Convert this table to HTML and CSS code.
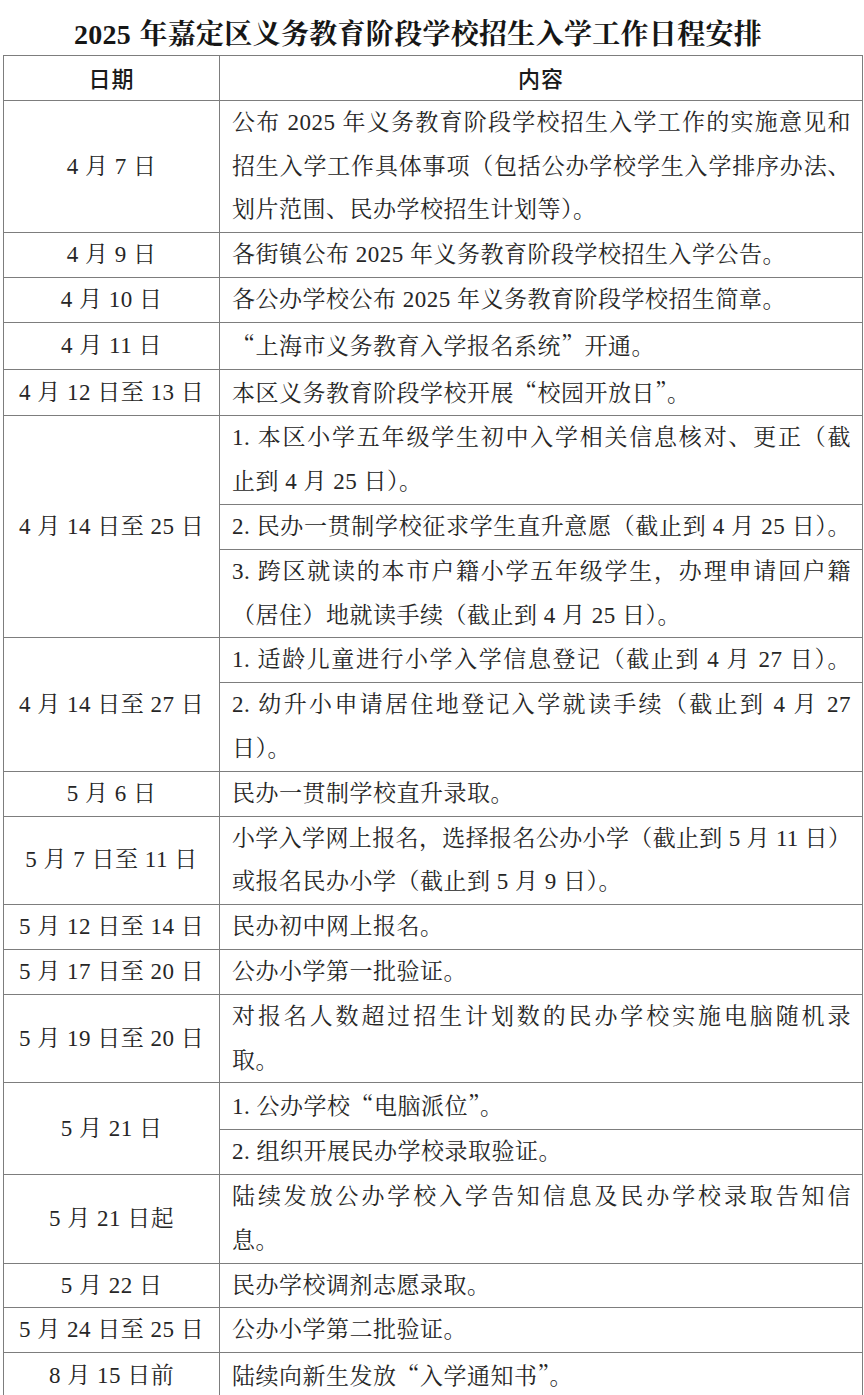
FILE: index.html
```html
<!DOCTYPE html>
<html lang="zh-CN">
<head>
<meta charset="utf-8">
<title>2025年嘉定区义务教育阶段学校招生入学工作日程安排</title>
<link rel="stylesheet" href="styles.css">
</head>
<body>
<h1 class="title">2025 年嘉定区义务教育阶段学校招生入学工作日程安排</h1>
<table class="sched">
  <colgroup><col class="c-date"><col class="c-text"></colgroup>
  <thead>
    <tr><th>日期</th><th>内容</th></tr>
  </thead>
  <tbody>
    <tr><td class="d">4 月 7 日</td><td class="t"><span class="j">公布 2025 年义务教育阶段学校招生入学工作的实施意见和</span><span class="j">招生入学工作具体事项（包括公办学校学生入学排序办法、</span><span class="l">划片范围、民办学校招生计划等）。</span></td></tr>
    <tr><td class="d">4 月 9 日</td><td class="t">各街镇公布 2025 年义务教育阶段学校招生入学公告。</td></tr>
    <tr><td class="d">4 月 10 日</td><td class="t">各公办学校公布 2025 年义务教育阶段学校招生简章。</td></tr>
    <tr><td class="d">4 月 11 日</td><td class="t"><span class="q">“</span>上海市义务教育入学报名系统<span class="q">”</span>开通。</td></tr>
    <tr><td class="d">4 月 12 日至 13 日</td><td class="t">本区义务教育阶段学校开展<span class="q">“</span>校园开放日<span class="q">”</span>。</td></tr>
    <tr><td class="d" rowspan="3">4 月 14 日至 25 日</td><td class="t"><span class="j">1. 本区小学五年级学生初中入学相关信息核对、更正（截</span><span class="l">止到 4 月 25 日）。</span></td></tr>
    <tr><td class="t"><span class="j">2. 民办一贯制学校征求学生直升意愿（截止到 4 月 25 日）。</span></td></tr>
    <tr><td class="t"><span class="j">3. 跨区就读的本市户籍小学五年级学生，办理申请回户籍</span><span class="l">（居住）地就读手续（截止到 4 月 25 日）。</span></td></tr>
    <tr><td class="d" rowspan="2">4 月 14 日至 27 日</td><td class="t"><span class="j">1. 适龄儿童进行小学入学信息登记（截止到 4 月 27 日）。</span></td></tr>
    <tr><td class="t"><span class="j">2. 幼升小申请居住地登记入学就读手续（截止到 4 月 27</span><span class="l">日）。</span></td></tr>
    <tr><td class="d">5 月 6 日</td><td class="t">民办一贯制学校直升录取。</td></tr>
    <tr><td class="d">5 月 7 日至 11 日</td><td class="t"><span class="j tight">小学入学网上报名，选择报名公办小学（截止到 5 月 11 日）</span><span class="l">或报名民办小学（截止到 5 月 9 日）。</span></td></tr>
    <tr><td class="d">5 月 12 日至 14 日</td><td class="t">民办初中网上报名。</td></tr>
    <tr><td class="d">5 月 17 日至 20 日</td><td class="t">公办小学第一批验证。</td></tr>
    <tr><td class="d">5 月 19 日至 20 日</td><td class="t"><span class="j">对报名人数超过招生计划数的民办学校实施电脑随机录</span><span class="l">取。</span></td></tr>
    <tr><td class="d" rowspan="2">5 月 21 日</td><td class="t">1. 公办学校<span class="q">“</span>电脑派位<span class="q">”</span>。</td></tr>
    <tr><td class="t">2. 组织开展民办学校录取验证。</td></tr>
    <tr><td class="d">5 月 21 日起</td><td class="t"><span class="j">陆续发放公办学校入学告知信息及民办学校录取告知信</span><span class="l">息。</span></td></tr>
    <tr><td class="d">5 月 22 日</td><td class="t">民办学校调剂志愿录取。</td></tr>
    <tr><td class="d">5 月 24 日至 25 日</td><td class="t">公办小学第二批验证。</td></tr>
    <tr><td class="d">8 月 15 日前</td><td class="t">陆续向新生发放<span class="q">“</span>入学通知书<span class="q">”</span>。</td></tr>
  </tbody>
</table>
</body>
</html>
```

FILE: styles.css
```css
html, body {
  margin: 0;
  padding: 0;
  background: #ffffff;
}

body {
  font-family: "Liberation Serif", "Noto Serif CJK SC", "Noto Sans CJK SC", serif;
  color: #262626;
}

.title {
  margin: 0;
  padding: 14px 28px 0 0;
  height: 41px;
  line-height: 41px;
  font-size: 28px;
  font-weight: 700;
  letter-spacing: 0.3px;
  word-spacing: 1px;
  text-align: center;
  color: #161616;
}

.sched {
  margin-left: 3px;
  width: 860px;
  table-layout: fixed;
  border-collapse: collapse;
  font-size: 23px;
  letter-spacing: 0.5px;
  word-spacing: 0;
}

.c-date { width: 216px; }

.sched th,
.sched td {
  border: 1px solid #7d7d7d;
  padding: 0;
  line-height: 43.8px;
  vertical-align: middle;
}

.sched th {
  font-family: "Noto Sans CJK SC", sans-serif;
  font-weight: 500;
  font-size: 22px;
  letter-spacing: 1px;
  color: #1a1a1a;
  text-align: center;
}

.sched td.d {
  text-align: center;
  white-space: nowrap;
}

.sched td.t {
  padding: 0 11px 0 12px;
  text-align: left;
}

.j {
  display: block;
  white-space: nowrap;
  text-align: justify;
  text-align-last: justify;
}

.j.tight {
  letter-spacing: 0.1px;
}

.l {
  display: block;
  white-space: nowrap;
}

.q {
  font-family: "Noto Serif CJK SC", "Noto Sans CJK SC", sans-serif;
  font-feature-settings: "fwid";
}
```
